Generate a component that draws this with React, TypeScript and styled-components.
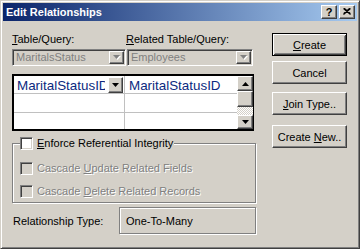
import React from "react";
import styled, { createGlobalStyle, css } from "styled-components";

const Global = createGlobalStyle`
  html, body { margin: 0; padding: 0; background: #D4D0C8; }
  body { font-family: "Liberation Sans", Arial, sans-serif; font-size: 11px; color: #000; }
  * { box-sizing: border-box; }
`;

const raised = css`
  border: 1px solid;
  border-color: #fff #404040 #404040 #fff;
  box-shadow: inset -1px -1px #808080, inset 1px 1px #D4D0C8;
  background: #D4D0C8;
`;

const sunken = css`
  border: 1px solid;
  border-color: #808080 #fff #fff #808080;
  box-shadow: inset 1px 1px #404040, inset -1px -1px #D4D0C8;
`;

const etched = css`
  border: 1px solid #808080;
  box-shadow: inset 1px 1px #fff, 1px 1px #fff;
`;

const Window = styled.div`
  width: 360px;
  height: 249px;
  background: #D4D0C8;
  border: 1px solid;
  border-color: #D4D0C8 #404040 #404040 #D4D0C8;
  box-shadow: inset 1px 1px #fff, inset -1px -1px #808080;
  padding: 2px;
  display: flex;
  flex-direction: column;
`;

const TitleBar = styled.div`
  height: 18px;
  flex: none;
  background: linear-gradient(to right, #0A246A, #A6CAF0);
  display: flex;
  align-items: center;
  justify-content: space-between;
  padding: 0 2px 0 3px;
`;

const Title = styled.span`
  color: #fff;
  font-weight: bold;
  font-size: 11px;
  line-height: 13px;
`;

const CaptionButtons = styled.div`
  display: flex;
  gap: 2px;
`;

const CaptionButton = styled.div`
  ${raised};
  width: 16px;
  height: 14px;
  display: flex;
  align-items: center;
  justify-content: center;
  font-weight: bold;
  font-size: 11px;
  line-height: 12px;
  padding-bottom: 1px;
`;

const Body = styled.div`
  flex: 1;
  display: flex;
  justify-content: space-between;
  padding: 12px 10px 0 9px;
`;

const LeftCol = styled.div`
  width: 244px;
  display: flex;
  flex-direction: column;
`;

const FieldLabels = styled.div`
  display: grid;
  grid-template-columns: 114px 1fr;
  height: 13px;
  line-height: 13px;
`;

const U = styled.span`
  text-decoration: underline;
  text-underline-offset: 1px;
`;

const ComboRow = styled.div`
  display: flex;
  gap: 1px;
  margin-top: 3px;
`;

const Combo = styled.div<{ $w: number }>`
  ${sunken};
  width: ${(p) => p.$w}px;
  height: 17px;
  padding: 1px;
  display: flex;
  align-items: stretch;
  background: #D4D0C8;
`;

const ComboText = styled.span`
  flex: 1;
  color: #808080;
  padding-left: 2px;
  line-height: 13px;
  white-space: nowrap;
  overflow: hidden;
`;

const ArrowButton = styled.div<{ $w?: number }>`
  ${raised};
  width: ${(p) => p.$w ?? 15}px;
  flex: none;
  display: flex;
  align-items: center;
  justify-content: center;
`;

const Grid = styled.div`
  margin-top: 8px;
  width: 242px;
  height: 57px;
  border: 2px solid #000;
  border-right-width: 1px;
  display: flex;
  background: #fff;
`;

const Cells = styled.div`
  width: 223px;
  display: flex;
  flex-direction: column;
`;

const Row = styled.div<{ $h: number; $last?: boolean }>`
  height: ${(p) => p.$h}px;
  display: grid;
  grid-template-columns: 111px 112px;
  border-bottom: ${(p) => (p.$last ? "none" : "1px solid #c0c0c0")};
`;

const Cell = styled.div<{ $first?: boolean }>`
  display: flex;
  align-items: center;
  overflow: hidden;
  border-right: ${(p) => (p.$first ? "1px solid #c0c0c0" : "none")};
  padding: 1px ${(p) => (p.$first ? "1px" : "0")} 0 ${(p) => (p.$first ? "3px" : "4px")};
`;

const CellText = styled.span<{ $clip?: number }>`
  flex: ${(p) => (p.$clip ? "none" : "1")};
  width: ${(p) => (p.$clip ? `${p.$clip}px` : "auto")};
  min-width: 0;
  font-size: 13.4px;
  line-height: 15px;
  color: #0b2a80;
  white-space: nowrap;
  overflow: hidden;
`;

const CellDrop = styled(ArrowButton)`
  height: 16px;
  margin-left: auto;
  align-self: flex-start;
`;

const Scrollbar = styled.div`
  width: 16px;
  display: flex;
  flex-direction: column;
`;

const ScrollBtn = styled(ArrowButton)<{ $h: number }>`
  width: 16px;
  height: ${(p) => p.$h}px;
`;

const Thumb = styled.div`
  ${raised};
  height: 16px;
`;

const Track = styled.div`
  flex: 1;
  background: repeating-conic-gradient(#fff 0 25%, #D4D0C8 0 50%) 0 0 / 2px 2px;
`;

const Group = styled.fieldset`
  ${etched};
  margin: 6px 0 0;
  width: 244px;
  min-width: 0;
  padding: 12px 0 4px 7px;
  display: flex;
  flex-direction: column;
  gap: 10px;
`;

const Legend = styled.legend`
  padding: 0 1px 0 0;
  background: #D4D0C8;
  display: flex;
  align-items: center;
  gap: 4px;
  height: 13px;
  line-height: 13px;
`;

const CheckRow = styled.div`
  display: flex;
  align-items: center;
  gap: 4px;
  height: 13px;
  line-height: 13px;
`;

const Check = styled.span<{ $disabled?: boolean }>`
  ${sunken};
  width: 13px;
  height: 13px;
  flex: none;
  background: ${(p) => (p.$disabled ? "#D4D0C8" : "#fff")};
`;

const Caption = styled.span<{ $disabled?: boolean }>`
  color: ${(p) => (p.$disabled ? "#808080" : "#000")};
  text-shadow: ${(p) => (p.$disabled ? "1px 1px 0 #fff" : "none")};
  white-space: nowrap;
`;

const RelRow = styled.div`
  margin-top: 4px;
  display: flex;
  align-items: center;
  justify-content: space-between;
  padding-left: 1px;
`;

const TypeBox = styled.div`
  ${etched};
  width: 137px;
  height: 27px;
  padding-left: 6px;
  display: flex;
  align-items: center;
`;

const RightCol = styled.div`
  width: 75px;
  display: flex;
  flex-direction: column;
`;

const Button = styled.div<{ $default?: boolean; $mt: number }>`
  ${raised};
  margin-top: ${(p) => p.$mt}px;
  height: 23px;
  display: flex;
  align-items: center;
  justify-content: center;
  white-space: nowrap;
  ${(p) =>
    p.$default &&
    css`
      border: 1px solid #000;
      box-shadow: inset 1px 1px #fff, inset -1px -1px #404040,
        inset 2px 2px #D4D0C8, inset -2px -2px #808080;
    `}
`;

const Arrow = ({ dir, color = "#000" }: { dir: "up" | "down"; color?: string }) => (
  <svg width="7" height="4" viewBox="0 0 7 4">
    <polygon
      points={dir === "down" ? "0,0 7,0 3.5,4" : "0,4 7,4 3.5,0"}
      fill={color}
    />
  </svg>
);

const DisabledArrow = () => (
  <svg width="8" height="5" viewBox="0 0 8 5">
    <polygon points="1,1 8,1 4.5,5" fill="#fff" />
    <polygon points="0,0 7,0 3.5,4" fill="#808080" />
  </svg>
);

const CloseGlyph = () => (
  <svg width="8" height="7" viewBox="0 0 8 7">
    <path d="M0.5 0.5 L7.5 6.5 M1.5 0.5 L7.5 5.6 M7.5 0.5 L0.5 6.5 M6.5 0.5 L0.5 5.6" stroke="#000" strokeWidth="1.1" />
  </svg>
);

export default function App() {
  return (
    <>
      <Global />
      <Window>
        <TitleBar>
          <Title>Edit Relationships</Title>
          <CaptionButtons>
            <CaptionButton>?</CaptionButton>
            <CaptionButton>
              <CloseGlyph />
            </CaptionButton>
          </CaptionButtons>
        </TitleBar>
        <Body>
          <LeftCol>
            <FieldLabels>
              <span>
                <U>T</U>able/Query:
              </span>
              <span>
                <U>R</U>elated Table/Query:
              </span>
            </FieldLabels>
            <ComboRow>
              <Combo $w={114}>
                <ComboText>MaritalsStatus</ComboText>
                <ArrowButton>
                  <DisabledArrow />
                </ArrowButton>
              </Combo>
              <Combo $w={126}>
                <ComboText>Employees</ComboText>
                <ArrowButton>
                  <DisabledArrow />
                </ArrowButton>
              </Combo>
            </ComboRow>
            <Grid>
              <Cells>
                <Row $h={18}>
                  <Cell $first>
                    <CellText $clip={88}>MaritalStatusID</CellText>
                    <CellDrop $w={15}>
                      <Arrow dir="down" />
                    </CellDrop>
                  </Cell>
                  <Cell>
                    <CellText>MaritalStatusID</CellText>
                  </Cell>
                </Row>
                <Row $h={19}>
                  <Cell $first />
                  <Cell />
                </Row>
                <Row $h={16} $last>
                  <Cell $first />
                  <Cell />
                </Row>
              </Cells>
              <Scrollbar>
                <ScrollBtn $h={15}>
                  <Arrow dir="up" />
                </ScrollBtn>
                <Thumb />
                <Track />
                <ScrollBtn $h={14}>
                  <Arrow dir="down" />
                </ScrollBtn>
              </Scrollbar>
            </Grid>
            <Group>
              <Legend>
                <Check />
                <Caption>
                  <U>E</U>nforce Referential Integrity
                </Caption>
              </Legend>
              <CheckRow>
                <Check $disabled />
                <Caption $disabled>
                  Cascade <U>U</U>pdate Related Fields
                </Caption>
              </CheckRow>
              <CheckRow>
                <Check $disabled />
                <Caption $disabled>
                  Cascade <U>D</U>elete Related Records
                </Caption>
              </CheckRow>
            </Group>
            <RelRow>
              <span>Relationship Type:</span>
              <TypeBox>One-To-Many</TypeBox>
            </RelRow>
          </LeftCol>
          <RightCol>
            <Button $default $mt={0}>
              <span>
                <U>C</U>reate
              </span>
            </Button>
            <Button $mt={5}>Cancel</Button>
            <Button $mt={8}>
              <span>
                <U>J</U>oin Type..
              </span>
            </Button>
            <Button $mt={10}>
              <span>
                Create <U>N</U>ew..
              </span>
            </Button>
          </RightCol>
        </Body>
      </Window>
    </>
  );
}
